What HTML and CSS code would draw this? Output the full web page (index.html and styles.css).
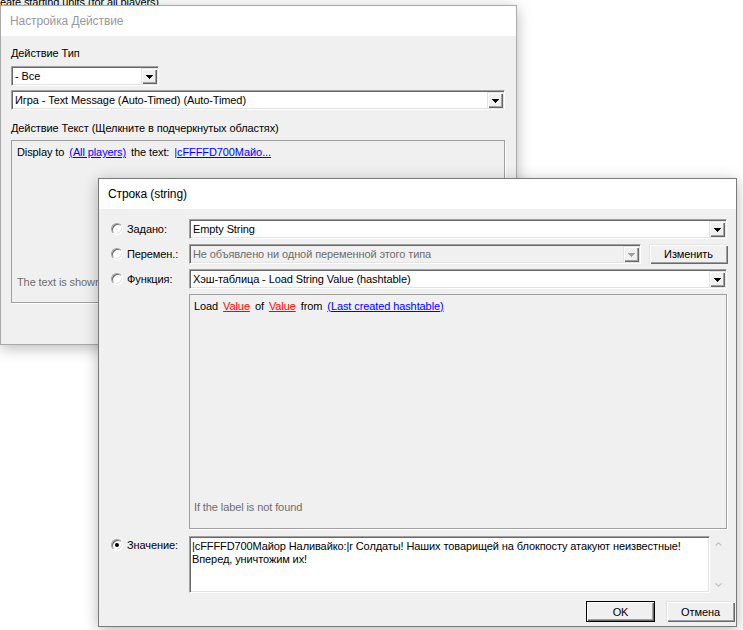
FILE: index.html
```html
<!DOCTYPE html>
<html lang="ru">
<head>
<meta charset="utf-8">
<title>Строка (string)</title>
<link rel="stylesheet" href="styles.css">
</head>
<body>
<div class="desktop">
  <div class="bg-text">eate starting units (for all players)</div>

  <section class="win win-action">
    <header class="titlebar inactive">Настройка Действие</header>
    <div class="body-action">
      <div class="label">Действие Тип</div>
      <div class="combo combo-cat">
        <span class="combo-text">- Все</span>
        <span class="drop"><svg width="7" height="4" viewBox="0 0 7 4"><rect x="0" y="0" width="7" height="1"/><rect x="1" y="1" width="5" height="1"/><rect x="2" y="2" width="3" height="1"/><rect x="3" y="3" width="1" height="1"/></svg></span>
      </div>
      <div class="combo combo-func">
        <span class="combo-text">Игра - Text Message (Auto-Timed) (Auto-Timed)</span>
        <span class="drop"><svg width="7" height="4" viewBox="0 0 7 4"><rect x="0" y="0" width="7" height="1"/><rect x="1" y="1" width="5" height="1"/><rect x="2" y="2" width="3" height="1"/><rect x="3" y="3" width="1" height="1"/></svg></span>
      </div>
      <div class="label label-text">Действие Текст (Щелкните в подчеркнутых областях)</div>
      <div class="textpanel">
        <div class="line"><span>Display to</span><a class="link">(All players)</a><span>the text:</span><a class="link">|cFFFFD700Майо...</a></div>
        <div class="hint">The text is shown</div>
      </div>
    </div>
  </section>

  <section class="win win-string">
    <header class="titlebar">Строка (string)</header>
    <div class="body-string">
      <div class="opt"><span class="radio"></span><span>Задано:</span></div>
      <div class="combo">
        <span class="combo-text">Empty String</span>
        <span class="drop"><svg width="7" height="4" viewBox="0 0 7 4"><rect x="0" y="0" width="7" height="1"/><rect x="1" y="1" width="5" height="1"/><rect x="2" y="2" width="3" height="1"/><rect x="3" y="3" width="1" height="1"/></svg></span>
      </div>

      <div class="opt"><span class="radio"></span><span>Перемен.:</span></div>
      <div class="varrow">
        <div class="combo disabled">
          <span class="combo-text">Не объявлено ни одной переменной этого типа</span>
          <span class="drop"><svg width="7" height="4" viewBox="0 0 7 4"><rect x="0" y="0" width="7" height="1"/><rect x="1" y="1" width="5" height="1"/><rect x="2" y="2" width="3" height="1"/><rect x="3" y="3" width="1" height="1"/></svg></span>
        </div>
        <button class="btn btn-edit">Изменить</button>
      </div>

      <div class="opt"><span class="radio"></span><span>Функция:</span></div>
      <div class="combo">
        <span class="combo-text">Хэш-таблица - Load String Value (hashtable)</span>
        <span class="drop"><svg width="7" height="4" viewBox="0 0 7 4"><rect x="0" y="0" width="7" height="1"/><rect x="1" y="1" width="5" height="1"/><rect x="2" y="2" width="3" height="1"/><rect x="3" y="3" width="1" height="1"/></svg></span>
      </div>

      <div class="spacer"></div>
      <div class="funcpanel">
        <div class="line"><span>Load</span><a class="param">Value</a><span>of</span><a class="param">Value</a><span>from</span><a class="link">(Last created hashtable)</a></div>
        <div class="hint">If the label is not found</div>
      </div>

      <div class="opt opt-top"><span class="radio checked"></span><span>Значение:</span></div>
      <div class="memo-row">
        <div class="memo">|cFFFFD700Майор Наливайко:|r Солдаты! Наших товарищей на блокпосту атакуют неизвестные!<br>Вперед, уничтожим их!</div>
        <div class="vscroll">
          <svg width="7" height="4" viewBox="0 0 7 4"><path d="M0.5 3.5L3.5 0.8L6.5 3.5" fill="none" stroke="#c3c3c3" stroke-width="1.2"/></svg>
          <svg width="7" height="4" viewBox="0 0 7 4"><path d="M0.5 0.5L3.5 3.2L6.5 0.5" fill="none" stroke="#c3c3c3" stroke-width="1.2"/></svg>
        </div>
      </div>
    </div>
    <footer class="footer">
      <button class="btn btn-default">OK</button>
      <button class="btn">Отмена</button>
    </footer>
  </section>
</div>
</body>
</html>
```

FILE: styles.css
```css
* { box-sizing: border-box; }
html, body { margin: 0; padding: 0; }
body {
  width: 743px;
  height: 630px;
  overflow: hidden;
  background: #fff;
  font-family: "Liberation Sans", Arial, sans-serif;
  font-size: 11px;
  letter-spacing: -0.1px;
  color: #000;
}
.desktop { position: relative; width: 743px; height: 630px; overflow: hidden; }
.bg-text { position: absolute; left: 0; top: -4px; line-height: 13px; white-space: nowrap; }

.win {
  position: absolute;
  display: flex;
  flex-direction: column;
  background: #f0f0f0;
  box-shadow: 0 3px 14px rgba(0, 0, 0, 0.28);
}
.win-action { left: 0; top: 5px; width: 517px; height: 340px; border: 1px solid #a9a9a9; }
.win-string { left: 98px; top: 178px; width: 639px; height: 449px; border: 1px solid #7a7a7a; }

.titlebar {
  height: 30px;
  flex: none;
  background: #fff;
  display: flex;
  align-items: center;
  padding-left: 9px;
  font-size: 12px;
  letter-spacing: -0.1px;
}
.titlebar.inactive { color: #999; }

/* dialog 1 */
.body-action {
  padding: 11px 11px 0 10px;
  display: flex;
  flex-direction: column;
  align-items: flex-start;
}
.label { line-height: 13px; white-space: nowrap; }
.combo-cat { width: 148px; margin-top: 6px; }
.combo-func { width: 494px; margin-top: 4px; }
.label-text { margin-top: 12px; margin-bottom: 5px; }

.textpanel {
  width: 494px;
  height: 163px;
  border: 1px solid #a0a0a0;
  box-shadow: 1px 1px 0 #fff;
  padding: 5px 5px 13px 5px;
  display: flex;
  flex-direction: column;
  justify-content: space-between;
}

.line { display: flex; gap: 5px; line-height: 13px; white-space: nowrap; }
.link { color: #0000ff; text-decoration: underline; }
.param { color: #ff0000; text-decoration: underline; }
.hint { color: #6d6d6d; line-height: 13px; white-space: nowrap; }

/* combo box */
.combo {
  height: 20px;
  display: flex;
  align-items: center;
  background: #fff;
  border: 1px solid;
  border-color: #a0a0a0 #fff #fff #a0a0a0;
  box-shadow: inset 1px 1px 0 #696969, inset -1px -1px 0 #e3e3e3;
  padding: 1px 1px 1px 2px;
}
.combo-text { flex: 1; line-height: 13px; white-space: nowrap; overflow: hidden; padding-left: 1px; }
.drop {
  width: 16px;
  height: 16px;
  flex: none;
  display: flex;
  align-items: center;
  justify-content: center;
  background: #f0f0f0;
  box-shadow: inset 1px 1px 0 #e3e3e3, inset 2px 2px 0 #fff, inset -1px -1px 0 #696969, inset -2px -2px 0 #a0a0a0;
}
.drop svg { fill: #000; margin-top: 1px; }
.combo.disabled { background: #f0f0f0; color: #6d6d6d; }
.combo.disabled .drop svg { fill: #a0a0a0; }

/* dialog 2 */
.body-string {
  padding: 10px 9px 0 12px;
  display: grid;
  grid-template-columns: 78px 1fr;
  grid-template-rows: 20px 20px 20px 235px 59px;
  row-gap: 5px;
}
.opt { display: flex; align-items: center; gap: 4px; line-height: 13px; white-space: nowrap; }
.opt-top { align-items: flex-start; padding-top: 5px; }
.radio {
  width: 12px;
  height: 12px;
  flex: none;
  border-radius: 50%;
  background: #fff;
  border: 1px solid;
  border-color: #a0a0a0 #fff #fff #a0a0a0;
  box-shadow: inset 1px 1px 0 #696969, inset -1px -1px 0 #e3e3e3;
  display: flex;
  align-items: center;
  justify-content: center;
}
.radio.checked::after {
  content: "";
  width: 4px;
  height: 4px;
  border-radius: 50%;
  background: #000;
}

.varrow { display: flex; gap: 8px; }
.varrow .combo { flex: 1; }

.btn {
  font-family: inherit;
  font-size: 11px;
  letter-spacing: -0.1px;
  color: #000;
  background: #f0f0f0;
  border: none;
  padding: 0;
  margin: 0;
  display: flex;
  align-items: center;
  justify-content: center;
  box-shadow: inset 1px 1px 0 #e3e3e3, inset 2px 2px 0 #fff, inset -1px -1px 0 #696969, inset -2px -2px 0 #a0a0a0;
}
.btn-edit { width: 79px; height: 20px; margin-right: -1px; }

.funcpanel {
  border: 1px solid #a0a0a0;
  box-shadow: 1px 1px 0 #fff;
  padding: 5px 4px 14px 4px;
  display: flex;
  flex-direction: column;
  justify-content: space-between;
}

.memo-row { display: flex; margin-top: 2px; height: 57px; }
.memo {
  flex: 1;
  background: #fff;
  border: 1px solid;
  border-color: #a0a0a0 #fff #fff #a0a0a0;
  box-shadow: inset 1px 1px 0 #696969, inset -1px -1px 0 #e3e3e3;
  padding: 3px 2px 0 2px;
  line-height: 13px;
}
.vscroll {
  width: 17px;
  flex: none;
  display: flex;
  flex-direction: column;
  align-items: center;
  justify-content: space-between;
  padding: 6px 0 6px 0;
}

.footer {
  display: flex;
  justify-content: flex-end;
  gap: 11px;
  padding: 8px 1px 0 0;
}
.footer .btn { width: 69px; height: 21px; }
.btn-default {
  box-shadow: inset 0 0 0 1px #000, inset 2px 2px 0 #fff, inset -2px -2px 0 #696969, inset -3px -3px 0 #a0a0a0;
}
```
